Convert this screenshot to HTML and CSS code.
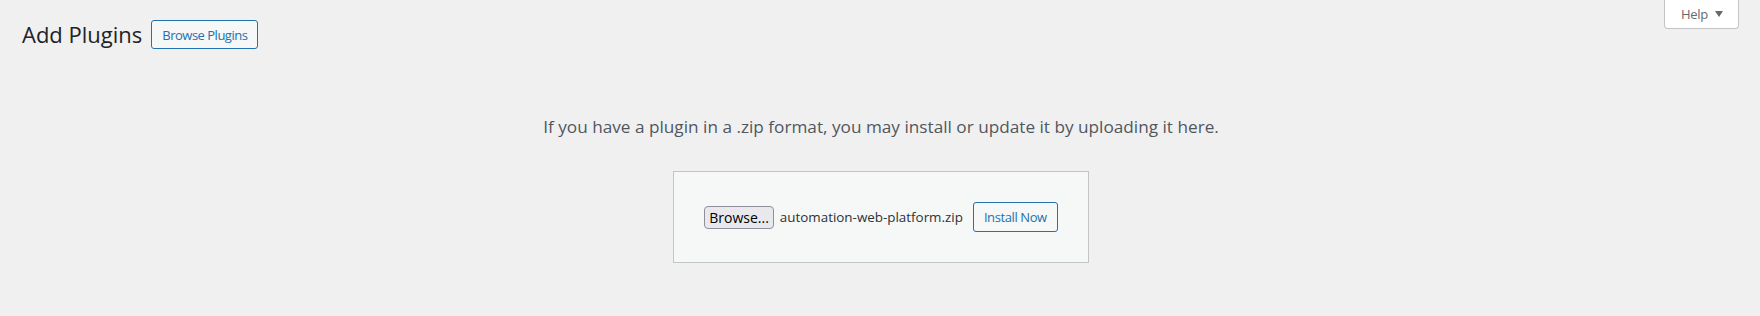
FILE: index.html
```html
<!DOCTYPE html>
<html lang="en">
<head>
<meta charset="utf-8">
<title>Add Plugins</title>
<link rel="stylesheet" href="styles.css">
</head>
<body>
<div class="screen-meta-links">
  <button class="help-tab" type="button">Help <svg class="help-arrow" width="8" height="6" viewBox="0 0 8 6"><path d="M0 0h8L4 6z" fill="#646970"/></svg></button>
</div>
<div class="wrap">
  <div class="title-row">
    <h1 class="page-title">Add Plugins</h1>
    <a class="page-title-action" href="#">Browse Plugins</a>
  </div>
  <div class="upload-plugin">
    <p class="install-help">If you have a plugin in a .zip format, you may install or update it by uploading it here.</p>
    <form class="upload-form">
      <span class="file-button">Browse...</span>
      <span class="file-name">automation-web-platform.zip</span>
      <button class="install-button" type="button">Install Now</button>
    </form>
  </div>
</div>
</body>
</html>
```

FILE: styles.css
```css
html, body {
  margin: 0;
  padding: 0;
}
body {
  background: #f0f0f1;
  font-family: "Open Sans", "Noto Sans", sans-serif;
  color: #3c434a;
  font-size: 13px;
}
.screen-meta-links {
  float: right;
  margin-right: 21px;
}
.help-tab {
  display: flex;
  align-items: center;
  gap: 7px;
  height: 29px;
  padding: 0 15px 0 16px;
  box-sizing: border-box;
  background: #fff;
  border: 1px solid #c3c4c7;
  border-top: none;
  border-radius: 0 0 4px 4px;
  color: #646970;
  font-family: inherit;
  font-size: 13px;
  letter-spacing: -0.3px;
}
.help-arrow {
  display: block;
}
.wrap {
  margin: 0 20px 0 22px;
  padding-top: 20px;
}
.title-row {
  display: flex;
  align-items: center;
  gap: 9px;
}
.page-title {
  margin: 0;
  font-size: 22px;
  font-weight: 400;
  color: #1d2327;
  line-height: 29px;
}
.page-title-action {
  display: inline-flex;
  align-items: center;
  height: 29px;
  box-sizing: border-box;
  padding: 0 10px;
  border: 1px solid #2271b1;
  border-radius: 3px;
  background: #f6f7f7;
  color: #2271b1;
  font-size: 13px;
  letter-spacing: -0.5px;
  text-decoration: none;
}
.upload-plugin {
  display: flex;
  flex-direction: column;
  align-items: center;
}
.install-help {
  margin: 0;
  padding-top: 66px;
  font-size: 17.2px;
  color: #50575e;
  line-height: 24px;
  text-align: center;
}
.upload-form {
  margin-top: 32px;
  display: flex;
  align-items: center;
  padding: 30px;
  border: 1px solid #c3c4c7;
  background: #f6f7f7;
}
.file-button {
  display: inline-flex;
  align-items: center;
  height: 23px;
  box-sizing: border-box;
  padding: 0 4px;
  border: 1px solid #8f8f9d;
  border-radius: 4px;
  background: #e9e9ed;
  color: #000;
  font-size: 14px;
}
.file-name {
  margin-left: 6px;
  margin-right: 10px;
  font-size: 13.4px;
  color: #2c3338;
}
.install-button {
  height: 30px;
  padding: 0 10px;
  border: 1px solid #2271b1;
  border-radius: 3px;
  background: #f6f7f7;
  color: #2271b1;
  font-family: inherit;
  font-size: 13px;
  letter-spacing: -0.4px;
}
```
